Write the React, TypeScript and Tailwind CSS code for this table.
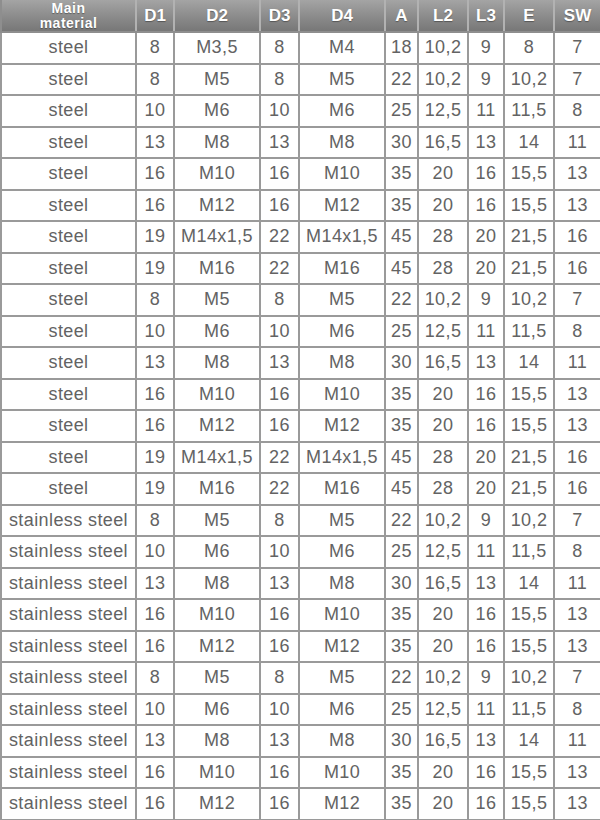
const cols = [135, 38, 86, 39, 86, 33, 50, 36, 50, 47];
const heads = ["D1", "D2", "D3", "D4", "A", "L2", "L3", "E", "SW"];

const steelRows = [
  ["8", "M3,5", "8", "M4", "18", "10,2", "9", "8", "7"],
  ["8", "M5", "8", "M5", "22", "10,2", "9", "10,2", "7"],
  ["10", "M6", "10", "M6", "25", "12,5", "11", "11,5", "8"],
  ["13", "M8", "13", "M8", "30", "16,5", "13", "14", "11"],
  ["16", "M10", "16", "M10", "35", "20", "16", "15,5", "13"],
  ["16", "M12", "16", "M12", "35", "20", "16", "15,5", "13"],
  ["19", "M14x1,5", "22", "M14x1,5", "45", "28", "20", "21,5", "16"],
  ["19", "M16", "22", "M16", "45", "28", "20", "21,5", "16"],
];

const shortSet = steelRows.slice(1);
const stainlessSet = steelRows.slice(1, 6);

const rows: [string, string[]][] = [
  ...steelRows.map((r) => ["steel", r] as [string, string[]]),
  ...shortSet.map((r) => ["steel", r] as [string, string[]]),
  ...stainlessSet.map((r) => ["stainless steel", r] as [string, string[]]),
  ...stainlessSet.map((r) => ["stainless steel", r] as [string, string[]]),
];

export default function App() {
  return (
    <div className="w-[600px] h-[820px] bg-white overflow-hidden">
      <table
        className="w-[600px] table-fixed border-collapse text-[#636363]"
        style={{ fontFamily: '"Liberation Sans", Arial, sans-serif' }}
      >
        <colgroup>
          {cols.map((w, i) => (
            <col key={i} style={{ width: w }} />
          ))}
        </colgroup>
        <thead>
          <tr className="h-[32px] bg-gradient-to-b from-[#a4a4a4] via-[#8c8c8c] to-[#767676]">
            <th className="border-x-2 border-[#b2b2b2] border-b-2 border-b-[#8e8e8e] border-l-[#8e8e8e] p-0 text-[14px] leading-[15px] tracking-[0.5px] font-bold text-white [text-shadow:0_1px_1px_rgba(0,0,0,0.35)]">
              <div>Main</div>
              <div>material</div>
            </th>
            {heads.map((h, i) => (
              <th
                key={h}
                className={
                  "border-x-2 border-[#b2b2b2] border-b-2 border-b-[#8e8e8e] p-0 text-[17px] font-bold text-white [text-shadow:0_1px_1px_rgba(0,0,0,0.35)]" +
                  (i === heads.length - 1 ? " border-r-[#8e8e8e]" : "")
                }
              >
                {h}
              </th>
            ))}
          </tr>
        </thead>
        <tbody>
          {rows.map(([mat, vals], i) => (
            <tr key={i} className="h-[31.5px]">
              <td className="border-2 border-[#9a9a9a] p-0 text-center text-[18px] tracking-[0.4px] whitespace-nowrap">
                {mat}
              </td>
              {vals.map((v, j) => (
                <td
                  key={j}
                  className="border-2 border-[#9a9a9a] p-0 text-center text-[18px] tracking-[0.4px] whitespace-nowrap"
                >
                  {v}
                </td>
              ))}
            </tr>
          ))}
        </tbody>
      </table>
    </div>
  );
}
